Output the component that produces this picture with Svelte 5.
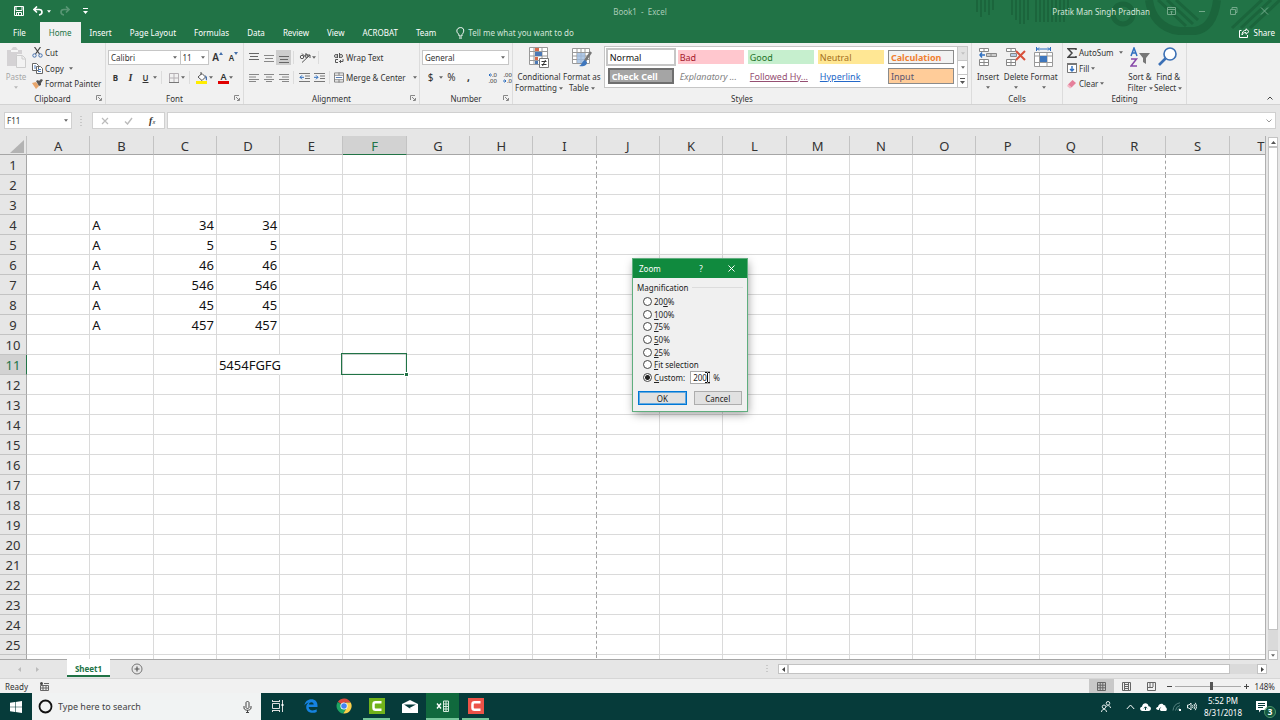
<script>
	const tabs = ['File', 'Home', 'Insert', 'Page Layout', 'Formulas', 'Data', 'Review', 'View', 'ACROBAT', 'Team'];
	const columns = 'ABCDEFGHIJKLMNOPQRST'.split('');
	const rows = Array.from({ length: 25 }, (_, i) => i + 1);
	const cells = {
		B4: 'A', C4: 34, D4: 34,
		B5: 'A', C5: 5, D5: 5,
		B6: 'A', C6: 46, D6: 46,
		B7: 'A', C7: 546, D7: 546,
		B8: 'A', C8: 45, D8: 45,
		B9: 'A', C9: 457, D9: 457,
		D11: '5454FGFG'
	};
	// last column of every printed page
	const breaks = ['I', 'R'];

	const styles = [
		['Normal', 'normal'],
		['Bad', 'bad'],
		['Good', 'good'],
		['Neutral', 'neutral'],
		['Calculation', 'calculation'],
		['Check Cell', 'check'],
		['Explanatory ...', 'explanatory'],
		['Followed Hy...', 'followed'],
		['Hyperlink', 'hyperlink'],
		['Input', 'inputcell']
	];

	// label is split round its access key
	const zooms = [
		['20', '0', '%'],
		['', '1', '00%'],
		['', '7', '5%'],
		['', '5', '0%'],
		['', '2', '5%'],
		['', 'F', 'it selection'],
		['', 'C', 'ustom:']
	];

	let activeTab = 'Home';
	let selected = 'F11';
	let zoomChoice = 6;
	let customZoom = '200';
	let zoomLevel = 56;
	let dialogOpen = true;

	$: selectedCol = selected[0];
	$: selectedRow = Number(selected.slice(1));
</script>

{#snippet caret()}
	<svg class="caret" width="5" height="3" viewBox="0 0 5 3"><path d="M0 0h5L2.500 3z" /></svg>
{/snippet}

{#snippet launcher()}
	<button class="launcher" aria-label="More options">
		<svg width="6" height="6" viewBox="0 0 6 6"><path d="M.5 5V.5H5M2 2l3 3M5.500 3v2.500H3" /></svg>
	</button>
{/snippet}

<div class="window">
	<header>
		<svg class="art" width="320" height="36" viewBox="0 0 320 36" aria-hidden="true">
			<g stroke="#1b653c" fill="none">
				<path stroke-width="2" d="M17 0v12M21 0v17M25 0v12M29 0v15M33 0v10M52 0v15M56 0v20M60 0v24M64 0v24M68 0v20M76 0v22M80 0v22M84 0v22M88 0v22M92 0v22M96 0v22M100 0v22M104 0v22M108 0v15" />
				<circle cx="163" cy="14" r="10" stroke-width="5" />
				<path stroke-width="8" d="M189 0c2 16 12 29 30 31h16c13-2 20-14 22-31" />
				<path stroke-width="3" d="M198 0l28 26M207 0l26 24M216 0l22 20M272 28l30-28M281 28l30-28M290 28l30-28" />
			</g>
		</svg>
		<div class="titlebar">
			<div class="quick">
				<button aria-label="Save">
					<svg width="10" height="10" viewBox="0 0 10 10"><path fill="none" stroke="#fff" d="M.5.5h9v9h-9zM2 1v3.500h6V1M2.500 9V6.500h5V9M4.500 7v2" /></svg>
				</button>
				<button aria-label="Undo">
					<svg width="10" height="10" viewBox="0 0 10 10"><path fill="none" stroke="#fff" stroke-width="1.600" d="M4 .5L1 3.500l3 3M1 3.500h5c4 0 4 5 0 5.500" /></svg>
				</button>
				{@render caret()}
				<button class="faded" aria-label="Redo">
					<svg width="10" height="10" viewBox="0 0 10 10"><path fill="none" stroke="#fff" stroke-width="1.600" d="M6 .5l3 3-3 3M9 3.500H4C0 3.500 0 8.500 4 9" /></svg>
				</button>
				<button aria-label="Customize Quick Access Toolbar">
					<svg width="5" height="6" viewBox="0 0 5 6"><path fill="#fff" d="M0 0h5v1H0zM0 3h5L2.500 6z" /></svg>
				</button>
			</div>
			<span class="doc">Book1&nbsp; -&nbsp; Excel</span>
			<div class="account">
				<span>Pratik Man Singh Pradhan</span>
				<button aria-label="Ribbon Display Options">
					<svg width="9" height="8" viewBox="0 0 9 8"><path d="M.5.5h8v7h-8zM.5 2.500h8M4.500 7V4M3 5.500L4.500 4 6 5.500" /></svg>
				</button>
				<button aria-label="Minimize"><svg width="9" height="8" viewBox="0 0 9 8"><path d="M1 4.500h6" /></svg></button>
				<button aria-label="Restore"><svg width="9" height="8" viewBox="0 0 9 8"><path d="M1.500 2.500h5v5h-5zM3 2V.5h5v5H7" /></svg></button>
				<button aria-label="Close"><svg width="9" height="8" viewBox="0 0 9 8"><path d="M1 .5l7 7M8 .5l-7 7" /></svg></button>
			</div>
		</div>
		<nav>
			{#each tabs as tab}
				<button class="tab" class:active={tab === activeTab} on:click={() => (activeTab = tab)}>{tab}</button>
			{/each}
			<button class="tellme">
				<svg width="9" height="12" viewBox="0 0 9 12"><path fill="none" stroke="#fff" d="M3 9V7.500C-.5 5 .5.7 4.500.6S8.500 5 6 7.500V9zM3 11h3" /></svg>
				Tell me what you want to do
			</button>
			<button class="share">
				<svg width="11" height="10" viewBox="0 0 11 10"><path fill="none" stroke="#fff" d="M2.500 2.500h-2v7h8V7M7 .8l3 2.700-3 2.700V4.500C5 4.500 4 5 3 7c0-3 1.500-4.700 4-4.700z" /></svg>
				Share
			</button>
		</nav>
	</header>

	<section class="ribbon">
		<div class="group clipboard">
			<div class="body">
				<button class="big faded">
					<svg width="20" height="22" viewBox="0 0 20 22"><path fill="#a9a5ab" d="M1 3h4l2-3h3l2 3h4v4h-5v12H1z" /><path fill="#fff" d="M5 3h7v2H5z" /><path fill="#f8f8f8" stroke="#999" d="M10.500 8.500h6l3 3v9h-9zM16 9v3h3" /></svg>
					<span>Paste</span>
					{@render caret()}
				</button>
				<div class="stack">
					<button>
						<svg width="11" height="11" viewBox="0 0 11 11"><path stroke="#444" fill="none" stroke-width="1.200" d="M2.500 0l5 7M8.500 0l-5 7" /><g fill="none" stroke="#4470ad"><circle cx="2.500" cy="8.500" r="1.700" /><circle cx="8.500" cy="8.500" r="1.700" /></g></svg>
						Cut
					</button>
					<button>
						<svg width="11" height="11" viewBox="0 0 11 11"><path fill="#fff" stroke="#666" d="M.5.5h4l2 2v5h-6zM4.500 3.500h4l2 2v5h-6z" /><path stroke="#4f7fbf" d="M2 3h2M2 5h2M6 6.500h3M6 8.500h3" /></svg>
						Copy <i class="gap"></i>{@render caret()}
					</button>
					<button>
						<svg width="11" height="10" viewBox="0 0 11 10"><path fill="#e8a66c" d="M0 4l4-1 3 4-3 3z" /><path fill="#555" d="M4 2l2-1 1 1 2-2 2 1-2 3v2L7 7z" /></svg>
						Format Painter
					</button>
				</div>
			</div>
			<div class="caption">Clipboard {@render launcher()}</div>
		</div>

		<div class="group font">
			<div class="body lines">
				<div class="line">
					<div class="combo family"><input aria-label="Font" value="Calibri" />{@render caret()}</div>
					<div class="combo size"><input aria-label="Font size" value="11" />{@render caret()}</div>
					<button class="ico grow" aria-label="Increase font size">A<svg width="4" height="3" viewBox="0 0 4 3"><path fill="#4470ad" d="M0 3h4L2 0z" /></svg></button>
					<button class="ico grow shrink" aria-label="Decrease font size">A<svg width="4" height="3" viewBox="0 0 4 3"><path fill="#4470ad" d="M0 0h4L2 3z" /></svg></button>
				</div>
				<div class="line">
					<button class="ico"><b>B</b></button>
					<button class="ico"><em>I</em></button>
					<button class="ico"><u>U</u></button>
					{@render caret()}
					<i class="rule"></i>
					<button class="ico" aria-label="Borders">
						<svg width="10" height="10" viewBox="0 0 10 10"><path fill="none" stroke="#b5b0b4" d="M.5.5h9v9h-9zM5 0v10M0 5h10" /><path stroke="#777" d="M0 9.500h10" /></svg>
					</button>
					{@render caret()}
					<i class="rule"></i>
					<button class="ico" aria-label="Fill color">
						<svg width="12" height="12" viewBox="0 0 12 12"><path fill="#ffed00" d="M0 9h11v3H0z" /><path fill="#fff" stroke="#555" d="M2 5l4-3.500L9.500 5 6 8.500zM5 3V0" /><path fill="#4470ad" d="M9 3l2 2v3l-1 .5z" /></svg>
					</button>
					{@render caret()}
					<button class="ico fontcolor" aria-label="Font color">A</button>
					{@render caret()}
				</div>
			</div>
			<div class="caption">Font {@render launcher()}</div>
		</div>

		<div class="group alignment">
			<div class="body lines">
				<div class="line">
					<button class="ico" aria-label="Top align"><svg width="10" height="10" viewBox="0 0 10 10"><path stroke="#666" d="M0 .5h10M1 3.500h8M0 6.500h10" /></svg></button>
					<button class="ico" aria-label="Middle align"><svg width="10" height="10" viewBox="0 0 10 10"><path stroke="#888" d="M0 2.500h10M1 5.500h8M0 8.500h10" /></svg></button>
					<button class="ico on" aria-label="Bottom align"><svg width="10" height="10" viewBox="0 0 10 10"><path stroke="#666" d="M0 3.500h10M1 6.500h8M0 9.500h10" /></svg></button>
					<i class="rule"></i>
					<button class="ico" aria-label="Orientation"><svg width="12" height="11" viewBox="0 0 12 11"><g fill="none" stroke="#555"><circle cx="3" cy="5" r="1.700" /><path d="M3 1.500l3 3M7 1v3.500" /><circle cx="7.500" cy="4" r="1.500" /><path d="M3 10.500L11 3M11 6V3H8" /></g></svg></button>
					{@render caret()}
					<i class="rule"></i>
					<button class="text alone">
						<svg width="10" height="10" viewBox="0 0 10 10"><g fill="none" stroke="#555"><circle cx="2" cy="3" r="1.500" /><path d="M3.500 1v4M5.500 0v5" /><circle cx="7" cy="3" r="1.500" /><path d="M4 6.500H1.500v3H4M9 6v2.500H5.500M7 7L5.500 8.500 7 10" /></g></svg>
						Wrap Text
					</button>
				</div>
				<div class="line">
					<button class="ico" aria-label="Align left"><svg width="10" height="8" viewBox="0 0 10 8"><path stroke="#888" d="M0 .5h10M0 3h7M0 5.500h10M0 7.500h7" /></svg></button>
					<button class="ico" aria-label="Center"><svg width="10" height="8" viewBox="0 0 10 8"><path stroke="#888" d="M0 .5h10M2 3h6M0 5.500h10M2 7.500h6" /></svg></button>
					<button class="ico" aria-label="Align right"><svg width="10" height="8" viewBox="0 0 10 8"><path stroke="#888" d="M0 .5h10M3 3h7M0 5.500h10M3 7.500h7" /></svg></button>
					<i class="rule"></i>
					<button class="ico" aria-label="Decrease indent"><svg width="11" height="9" viewBox="0 0 11 9"><path stroke="#777" d="M0 .5h11M6 3h5M6 5.500h5M0 8.500h11" /><path fill="none" stroke="#2e6fc0" d="M5 4.300H1M3 2.300l-2 2 2 2" /></svg></button>
					<button class="ico" aria-label="Increase indent"><svg width="11" height="9" viewBox="0 0 11 9"><path stroke="#777" d="M0 .5h11M6 3h5M6 5.500h5M0 8.500h11" /><path fill="none" stroke="#2e6fc0" d="M0 4.300h4M2 2.300l2 2-2 2" /></svg></button>
					<i class="rule"></i>
					<button class="text">
						<svg width="10" height="11" viewBox="0 0 11 11"><path fill="#fff" stroke="#777" d="M.5.5h10v10H.5zM.5 3h10M.5 8h10M5.500 0v3M5.500 8v3" /><path stroke="#4470ad" d="M2 5.500h7" /></svg>
						Merge &amp; Center
					</button>
					{@render caret()}
				</div>
			</div>
			<div class="caption">Alignment {@render launcher()}</div>
		</div>

		<div class="group number">
			<div class="body lines">
				<div class="line">
					<div class="combo format"><input aria-label="Number format" value="General" />{@render caret()}</div>
				</div>
				<div class="line">
					<button class="ico sign">$</button>
					{@render caret()}
					<button class="ico sign">%</button>
					<button class="ico sign"><b>,</b></button>
					<i class="rule"></i>
					<button class="ico dec">
						<svg width="4" height="4" viewBox="0 0 4 4"><path stroke="#2e6fc0" fill="none" d="M4 2H1M2.500.5L1 2l1.500 1.500" /></svg>.0<br />.00
					</button>
					<button class="ico dec">
						.00<br /><svg width="4" height="4" viewBox="0 0 4 4"><path stroke="#2e6fc0" fill="none" d="M0 2h3M1.500.5L3 2 1.500 3.500" /></svg>.0
					</button>
				</div>
			</div>
			<div class="caption">Number {@render launcher()}</div>
		</div>

		<div class="group styles">
			<div class="body">
				<button class="big">
					<svg width="20" height="22" viewBox="0 0 20 22"><path fill="#fff" stroke="#999" d="M.5.5h18v17H.5zM0 4.500h18M0 9h18M0 13.500h18M5 0v18M13 0v18" /><path fill="#d9694a" d="M6 1h4v3H6zM6 10h3v3H6z" /><path fill="#4b78b5" d="M6 5h7v4H6zM6 14h3v3H6z" /><path fill="#fff" stroke="#777" d="M10.500 11.500h9v9h-9z" /><path stroke="#333" d="M12.500 14.500h5M12.500 17.500h5M16.500 13l-3 6" /></svg>
					<span>Conditional<br />Formatting {@render caret()}</span>
				</button>
				<button class="big">
					<svg width="20" height="22" viewBox="0 0 20 22"><path fill="#fff" stroke="#999" d="M.5 1.500h17v15H.5zM0 5.500h18M0 9h18M0 12.500h18M5 1v16M9 1v16M13 1v16" /><path fill="#9ebce0" opacity=".8" d="M5 6h8v10H5z" /><path stroke="#777" stroke-width="2.500" d="M19 5l-6 9" /><path fill="#3f77bd" d="M13 13l2 2c0 4-4 5-8 4 3-1 3-5 6-6z" /></svg>
					<span>Format as<br />Table {@render caret()}</span>
				</button>
				<div class="gallery">
					<div class="swatches">
						{#each styles as [name, kind]}
							<button class="swatch {kind}">{name}</button>
						{/each}
					</div>
					<div class="spin">
						<button class="off" aria-label="Row up">{@render caret()}</button>
						<button aria-label="Row down">{@render caret()}</button>
						<button aria-label="More styles"><svg width="5" height="6" viewBox="0 0 5 6"><path fill="#555" d="M0 0h5v1H0zM0 3h5L2.500 6z" /></svg></button>
					</div>
				</div>
			</div>
			<div class="caption">Styles</div>
		</div>

		<div class="group cellsgroup">
			<div class="body">
				<button class="big">
					<svg width="18" height="22" viewBox="0 0 18 22"><path fill="#fff" stroke="#888" d="M.5 1.500h9v3h-9zM5 1v4M.5 12.500h9v6h-9zM5 12v7M0 15.500h10" /><path fill="#ccc" stroke="#888" d="M7.500 6.500h10v3h-10zM12 6v4" /><path stroke="#2e6fc0" stroke-width="1.400" fill="none" d="M6 8H1M3 5.500L1 8l2 2.500" /></svg>
					<span>Insert</span>{@render caret()}
				</button>
				<button class="big">
					<svg width="20" height="22" viewBox="0 0 20 22"><path fill="#fff" stroke="#888" d="M.5 1.500h9v3h-9zM5 1v4M.5 12.500h9v6h-9zM5 12v7M0 15.500h10" /><path fill="#b9cce6" stroke="#888" d="M4.500 6.500h6v3h-6z" /><path stroke="#d8503a" stroke-width="2" d="M10 4l9 9M19 4l-9 9" /></svg>
					<span>Delete</span>{@render caret()}
				</button>
				<button class="big">
					<svg width="20" height="22" viewBox="0 0 20 22"><path stroke="#2e6fc0" fill="none" d="M2.500 0v4M16.500 0v4M3 2h13M5 .5L3.500 2 5 3.500M14 .5L15.500 2 14 3.500" /><path fill="#fff" stroke="#999" d="M.5 5.500h18v14H.5zM0 9h18M0 15.500h18M5.500 5v14M13 5v14" /><path fill="#3f77bd" d="M6 9h7v6H6z" /></svg>
					<span>Format</span>{@render caret()}
				</button>
			</div>
			<div class="caption">Cells</div>
		</div>

		<div class="group editing">
			<div class="body">
				<div class="stack">
					<button>
						<svg width="10" height="10" viewBox="0 0 10 10"><path fill="none" stroke="#444" stroke-width="1.500" d="M9 2V.8H1L5 5 1 9.200h8V8" /></svg>
						AutoSum <i class="gap"></i>{@render caret()}
					</button>
					<button>
						<svg width="10" height="10" viewBox="0 0 10 10"><path fill="#fff" stroke="#777" d="M.5.5h9v9h-9z" /><path fill="#777" d="M0 0h10v2H0z" /><path fill="none" stroke="#2e6fc0" stroke-width="1.400" d="M5 3v5M3 6l2 2 2-2" /></svg>
						Fill {@render caret()}
					</button>
					<button>
						<svg width="10" height="10" viewBox="0 0 10 10"><path fill="#e5809b" d="M5.500 1L9 4 4.500 8.500 1 5.500z" /><path fill="#f3b5c4" d="M1 5.500l3.500 3L3 9.500 0 7z" /></svg>
						Clear {@render caret()}
					</button>
				</div>
				<button class="big">
					<svg width="20" height="22" viewBox="0 0 20 22"><path fill="none" stroke="#2e6fc0" stroke-width="1.500" d="M1 9l3-8 3 8M2 6h4" /><path fill="none" stroke="#8648a8" stroke-width="1.500" d="M1 12h5.500L1 19h6" /><path fill="#777" d="M9 6h11l-4 5v6l-3-2v-4z" /></svg>
					<span>Sort &amp;<br />Filter {@render caret()}</span>
				</button>
				<button class="big">
					<svg width="20" height="22" viewBox="0 0 20 22"><circle cx="12" cy="7" r="6" fill="#fff" stroke="#3b70b5" stroke-width="1.600" /><path stroke="#3b70b5" stroke-width="2.600" d="M7.500 11.500L1 18" /></svg>
					<span>Find &amp;<br />Select {@render caret()}</span>
				</button>
			</div>
			<div class="caption">Editing</div>
		</div>
		<button class="collapse" aria-label="Collapse the ribbon"><svg width="6" height="4" viewBox="0 0 6 4"><path fill="none" stroke="#444" d="M.5 3.500L3 1l2.500 2.500" /></svg></button>
	</section>

	<section class="formula">
		<div class="combo namebox"><input aria-label="Name box" bind:value={selected} />{@render caret()}</div>
		<svg class="grip" width="2" height="10" viewBox="0 0 2 10"><path stroke="#aaa" stroke-dasharray="1 2" d="M1 0v10" /></svg>
		<div class="fx">
			<button aria-label="Cancel entry"><svg width="8" height="8" viewBox="0 0 8 8"><path stroke="#bbb" stroke-width="1.200" d="M1 1l6 6M7 1L1 7" /></svg></button>
			<button aria-label="Enter"><svg width="9" height="8" viewBox="0 0 9 8"><path fill="none" stroke="#bbb" stroke-width="1.400" d="M1 4.500L3.500 7 8 1" /></svg></button>
			<button class="fn"><em>f</em><small>x</small></button>
		</div>
		<div class="combo entry"><input aria-label="Formula bar" /><svg width="6" height="4" viewBox="0 0 6 4"><path fill="none" stroke="#999" d="M.5.5L3 3 5.500.5" /></svg></div>
	</section>

	<main>
		<div class="grid">
			<table>
				<thead>
					<tr>
						<th class="corner"><svg width="14" height="13" viewBox="0 0 14 13"><path fill="#b3b3b3" d="M14 0v13H0z" /></svg></th>
						{#each columns as col}
							<th class:current={col === selectedCol}>{col}</th>
						{/each}
					</tr>
				</thead>
				<tbody>
					{#each rows as row}
						<tr>
							<th class:current={row === selectedRow}>{row}</th>
							{#each columns as col}
								{@const value = cells[col + row]}
								<td
									class:num={typeof value === 'number'}
									class:spill={value?.length > 7}
									class:break={breaks.includes(col)}
									class:selected={selected === col + row}
									on:click={() => (selected = col + row)}>{value ?? ''}</td
								>
							{/each}
						</tr>
					{/each}
					<tr>
						<th></th>
						{#each columns as col}
							<td class:break={breaks.includes(col)}></td>
						{/each}
					</tr>
				</tbody>
			</table>
		</div>
		<div class="vscroll">
			<button aria-label="Scroll up"><svg width="5" height="3" viewBox="0 0 5 3"><path fill="#555" d="M0 3h5L2.500 0z" /></svg></button>
			<div class="thumb"></div>
			<div class="track"></div>
			<button aria-label="Scroll down">{@render caret()}</button>
		</div>
	</main>

	<section class="sheets">
		<button class="step" aria-label="Previous sheet"><svg width="4" height="5" viewBox="0 0 4 5"><path fill="#bbb" d="M3 0v5L0 2.500z" /></svg></button>
		<button class="step" aria-label="Next sheet"><svg width="4" height="5" viewBox="0 0 4 5"><path fill="#bbb" d="M0 0v5l3-2.500z" /></svg></button>
		<button class="sheet">Sheet1</button>
		<button class="add" aria-label="New sheet"><svg width="12" height="12" viewBox="0 0 12 12"><circle cx="6" cy="6" r="5" fill="none" stroke="#777" /><path stroke="#555" stroke-width="1.200" d="M6 3.500v5M3.500 6h5" /></svg></button>
		<svg class="grip" width="2" height="8" viewBox="0 0 2 8"><path stroke="#aaa" stroke-dasharray="1 2" d="M1 0v8" /></svg>
		<div class="hscroll">
			<button aria-label="Scroll left"><svg width="3" height="5" viewBox="0 0 3 5"><path fill="#444" d="M3 0v5L0 2.500z" /></svg></button>
			<div class="thumb"></div>
			<div class="track"></div>
			<button aria-label="Scroll right"><svg width="3" height="5" viewBox="0 0 3 5"><path fill="#444" d="M0 0v5l3-2.500z" /></svg></button>
		</div>
	</section>

	<section class="status">
		<span>Ready</span>
		<svg class="macro" width="9" height="9" viewBox="0 0 9 9"><path fill="none" stroke="#666" d="M.5 3.500h8v5h-8zM3 4v5M6 4v5M1 6h7" /><circle cx="1.500" cy="1.500" r="1.500" fill="#444" /><path stroke="#666" d="M4 1.500h5" /></svg>
		<div class="views">
			<button class="on" aria-label="Normal view"><svg width="9" height="9" viewBox="0 0 9 9"><path fill="none" stroke="#666" d="M.5.5h8v8h-8zM3.200 0v9M5.800 0v9M0 3.200h9M0 5.800h9" /></svg></button>
			<button aria-label="Page layout view"><svg width="9" height="9" viewBox="0 0 9 9"><path fill="none" stroke="#666" d="M.5.5h8v8h-8zM2.500 1v7M6.500 1v7M3 2.500h3M3 4.500h3M3 6.500h3" /></svg></button>
			<button aria-label="Page break preview"><svg width="9" height="9" viewBox="0 0 9 9"><path fill="none" stroke="#666" d="M.5.5h8v8h-8zM3 0v5M6 0v5M0 5.500h6" /></svg></button>
		</div>
		<button class="step-zoom" aria-label="Zoom out"><svg width="5" height="5" viewBox="0 0 5 5"><path stroke="#444" d="M0 2.500h5" /></svg></button>
		<input class="zoom" type="range" min="0" max="100" aria-label="Zoom" bind:value={zoomLevel} />
		<button class="step-zoom" aria-label="Zoom in"><svg width="5" height="5" viewBox="0 0 5 5"><path stroke="#444" d="M0 2.500h5M2.500 0v5" /></svg></button>
		<button class="percent" on:click={() => (dialogOpen = true)}>148%</button>
	</section>

	<footer>
		<button class="start" aria-label="Start"><svg width="12" height="12" viewBox="0 0 12 12"><path fill="#fff" d="M0 1.700L5 1v4.700H0zM5.600.9L12 0v5.700H5.600zM0 6.300h5V11l-5-.7zM5.600 6.300H12V12l-6.400-.9z" /></svg></button>
		<label class="search">
			<svg width="15" height="15" viewBox="0 0 15 15"><circle cx="7.500" cy="7.500" r="6" fill="none" stroke="#111" stroke-width="1.800" /></svg>
			<input placeholder="Type here to search" />
			<svg width="9" height="12" viewBox="0 0 9 12"><path fill="none" stroke="#444" d="M3 1.500c0-1.300 3-1.300 3 0v5c0 1.300-3 1.300-3 0zM1 5v2c0 3 7 3 7 0V5M4.500 9v2.500M3 11.500h3" /></svg>
		</label>
		<div class="apps">
			<button aria-label="Task view"><svg width="12" height="12" viewBox="0 0 12 12"><path fill="none" stroke="#ddd" d="M.5 3.500h7v5h-7zM.5 0v2M7.500 0v2M0 1.500h8M.5 12v-2M7.500 12v-2M0 10.500h8M10.500 0v12" /><path fill="#fff" d="M9.500 4h2v2h-2z" /></svg></button>
			<button aria-label="Edge"><svg width="14" height="14" viewBox="0 0 14 14"><path fill="#1683e0" d="M.5 6.500C1 2.500 4 .3 7.300.3c4 0 6.200 2.700 6.200 6.200v1.600H4.700c0 4 5 4 8 2.200v2.600c-4.500 2-10.500.8-10.500-4.900C2.200 5.500 4 4 5 3.500 3.200 3.700 1.600 4.700.5 6.500zM4.900 5.600h4.800C9.500 2.400 5.300 2.500 4.900 5.600z" /></svg></button>
			<button aria-label="Chrome"><svg width="16" height="16" viewBox="0 0 16 16"><path fill="#dd4b3e" d="M8 8L1.900 3.700A7.500 7.500 0 0114.700 4.500H8z" /><path fill="#1fa463" d="M1.700 4a7.500 7.500 0 005.600 11.500L11 9.500 8 8z" /><path fill="#fcd04b" d="M14.700 4.500A7.500 7.500 0 017.300 15.500L11 9.500 10 4.500z" /><circle cx="8" cy="8" r="3.600" fill="#fff" /><circle cx="8" cy="8" r="2.800" fill="#4384f2" /></svg></button>
			<button class="open" aria-label="Camtasia"><svg width="16" height="16" viewBox="0 0 16 16"><path fill="#71b21a" d="M0 0h16v16H0z" /><path fill="none" stroke="#fff" stroke-width="2.500" d="M12.500 4.300H6.500q-2 0-2 2v3.400q0 2 2 2h6" /></svg></button>
			<button aria-label="Mail"><svg width="16" height="13" viewBox="0 0 16 13"><path fill="#fff" d="M0 4l8-4 8 4v9H0z" /><path fill="#063b3a" d="M2 4.500h12L7.500 8l2.500 2z" /></svg></button>
			<button class="open front" aria-label="Excel"><svg width="13" height="12" viewBox="0 0 13 12"><path stroke="#fff" stroke-width="1.400" fill="none" d="M1 3.500l4 5M5 3.500l-4 5" /><path fill="none" stroke="#d6eadd" d="M7.500 1v10.500h5V1zM10 1v10M7 4h5M7 6.500h5M7 9h5" /></svg></button>
			<button class="open" aria-label="Recorder"><svg width="16" height="16" viewBox="0 0 16 16"><path fill="#ec5348" d="M0 0h16v16H0z" /><path fill="none" stroke="#fff" stroke-width="2.500" d="M12.500 4.300H6.500q-2 0-2 2v3.400q0 2 2 2h6" /></svg></button>
		</div>
		<div class="tray">
			<svg class="people" width="10" height="11" viewBox="0 0 10 11"><g fill="none" stroke="#dfe9e8"><circle cx="7" cy="2.300" r="1.800" /><path d="M5 6c.5-2 4.500-2 4.500 1" /><circle cx="3" cy="5.800" r="1.800" /><path d="M.5 11c0-3.500 5-3.500 5 0" /></g></svg>
			<svg width="9" height="6" viewBox="0 0 9 6"><path fill="none" stroke="#fff" d="M.8 5l3.700-4 3.700 4" /></svg>
			<svg width="11" height="8" viewBox="0 0 11 8"><path fill="#fff" d="M2.500 8C-.5 8-.7 4 2 3.700 2.500-.5 8-1 8.500 3.200 12 3.500 11.500 8 8.500 8z" /><path fill="none" stroke="#063b3a" d="M5.500 7V4M4 5.300l1.500-1.500L7 5.300" /></svg>
			<svg width="11" height="8" viewBox="0 0 11 8"><path fill="#fff" d="M0 5.500C.5 4 1.500 4 2 4 2.500 0 7 0 7.500 2 10 2 9.500 4 9.500 4 11.500 5 11 8 9.500 8H5C3 7 4 5 5.500 4.500 3 4 3 7 3 7-.2 7 0 5.500 0 5.500z" /></svg>
			<svg width="10" height="9" viewBox="0 0 10 9"><g fill="none" stroke="#55817f"><path d="M1 8.500Q1.500 2 8 .8M3.500 8.500Q4 4.500 8 3.500M5.800 8.500Q6 6.500 8 6" /></g><path fill="#fff" d="M7 7h2v2H7z" /></svg>
			<svg width="10" height="9" viewBox="0 0 10 9"><path fill="none" stroke="#dfe9e8" d="M.5 3h1.500L4 1v7L2 6H.5zM5.500 3q1 1.500 0 3M7 2q2 2.500 0 5M8.300.8q3 3.700 0 7.400" /></svg>
		</div>
		<div class="clock"><span>5:52 PM</span><span>8/31/2018</span></div>
		<button class="notes" aria-label="Notifications">
			<svg width="12" height="12" viewBox="0 0 12 12"><path fill="#fff" d="M0 0h11v9H5l-2 2.500V9H0z" /><path stroke="#063b3a" d="M2 2.500h7M2 4.500h7M2 6.500h5" /></svg>
			<span>3</span>
		</button>
	</footer>

	{#if dialogOpen}
		<form class="dialog" on:submit|preventDefault={() => (dialogOpen = false)}>
			<div class="bar">
				<h2>Zoom</h2>
				<button type="button">?</button>
				<button type="button" aria-label="Close" on:click={() => (dialogOpen = false)}>
					<svg width="7" height="7" viewBox="0 0 7 7"><path stroke="#fff" d="M.5.5l6 6M6.500.5l-6 6" /></svg>
				</button>
			</div>
			<div class="heading">Magnification</div>
			<div class="options">
				{#each zooms as [before, key, after], i}
					<div class="option">
						<label><input type="radio" name="zoom" value={i} bind:group={zoomChoice} /><span>{before}<u>{key}</u>{after}</span></label>
						{#if i === 6}
							<span class="custom">
								<input aria-label="Custom zoom" bind:value={customZoom} /> %
								<svg class="beam" width="5" height="11" viewBox="0 0 5 11"><path fill="none" stroke="#111" d="M0 .5h2l.5.5.5-.5h2M2.500 1v9M0 10.500h2l.5-.5.5.5h2" /></svg>
							</span>
						{/if}
					</div>
				{/each}
			</div>
			<div class="actions">
				<button class="ok">OK</button>
				<button type="button" on:click={() => (dialogOpen = false)}>Cancel</button>
			</div>
		</form>
	{/if}
</div>

<style>
	:global(body) {
		background: #e6e6e6;
	}
	.window {
		position: relative;
		display: flex;
		flex-direction: column;
		height: 100vh;
		overflow: hidden;
		font: 8px/11px 'Noto Sans', 'Open Sans', sans-serif;
		color: #333;
	}
	button,
	input {
		font: inherit;
		color: inherit;
		border: 0;
		padding: 0;
		margin: 0;
		background: none;
		box-sizing: border-box;
	}
	button {
		display: flex;
		align-items: center;
		justify-content: center;
	}
	input {
		min-width: 0;
		outline: none;
	}
	svg {
		flex: none;
		display: block;
	}
	.caret {
		fill: #666;
		display: inline-block;
		vertical-align: middle;
		width: 4px;
	}
	.faded {
		opacity: 0.4;
	}

	/* title bar and tabs */
	header {
		position: relative;
		background: #217346;
		color: #fff;
	}
	.art {
		position: absolute;
		right: 0;
		top: 0;
	}
	.titlebar {
		position: relative;
		display: grid;
		grid-template-columns: 1fr auto 1fr;
		align-items: center;
		height: 22px;
	}
	.quick {
		display: flex;
		align-items: center;
		gap: 9px;
		padding-left: 14px;
	}
	.quick .caret {
		fill: #fff;
		margin-left: -5px;
	}
	.quick .faded {
		opacity: 0.25;
		margin-right: 4px;
	}
	.doc {
		color: #a9cbb8;
	}
	.account {
		display: flex;
		justify-content: flex-end;
		align-items: center;
		gap: 22px;
		padding-right: 11px;
		color: #d3e5da;
		white-space: nowrap;
	}
	.account span {
		margin-right: -5px;
	}
	.account path {
		fill: none;
		stroke: #73a98a;
	}
	nav {
		position: relative;
		display: flex;
		height: 21px;
		padding-left: 2px;
	}
	.tab {
		padding: 0 9px;
		height: 21px;
		white-space: nowrap;
	}
	.tab:first-child {
		padding: 0 14px 0 11px;
	}
	.tab.active {
		background: #f1f1f1;
		color: #217346;
	}
	.tellme {
		gap: 3px;
		margin-left: 11px;
		color: #d3e5da;
	}
	.share {
		gap: 4px;
		margin-left: auto;
		padding-right: 5px;
	}

	/* ribbon */
	.ribbon {
		display: flex;
		background: #f1f1f1;
		border-bottom: 1px solid #d2d2d2;
	}
	.group {
		display: flex;
		flex-direction: column;
		flex: none;
		box-sizing: border-box;
		padding: 2px 2px 0;
		border-right: 1px solid #dcdcdc;
	}
	.body {
		display: flex;
		height: 46px;
	}
	.caption {
		position: relative;
		height: 11px;
		padding-top: 2px;
		text-align: center;
	}
	.launcher {
		position: absolute;
		right: 1px;
		top: 4px;
	}
	.launcher path {
		fill: none;
		stroke: #888;
	}
	.clipboard {
		width: 106px;
	}
	.font {
		width: 138px;
	}
	.alignment {
		width: 176px;
	}
	.number {
		width: 93px;
	}
	.styles {
		width: 459px;
	}
	.cellsgroup {
		width: 91px;
	}
	.editing {
		width: 124px;
	}
	.stack {
		display: flex;
		flex-direction: column;
		justify-content: space-between;
		align-items: flex-start;
	}
	.stack button {
		height: 15px;
		gap: 2px;
		white-space: nowrap;
	}
	.gap {
		width: 1px;
	}
	.big {
		flex-direction: column;
		justify-content: flex-start;
		padding-top: 2px;
		min-width: 28px;
	}
	.big > span {
		line-height: 11px;
		margin-top: 2px;
		white-space: nowrap;
	}
	.big > .caret {
		margin-top: 4px;
	}
	.clipboard .big {
		margin-right: 2px;
	}
	.editing .stack {
		width: 59px;
		padding-left: 2px;
	}
	.lines {
		flex-direction: column;
		gap: 5px;
		padding-top: 5px;
		height: 41px;
	}
	.line {
		display: flex;
		align-items: center;
		height: 15px;
	}
	.combo {
		display: flex;
		align-items: center;
		box-sizing: border-box;
		height: 15px;
		padding: 0 3px 0 2px;
		background: #fff;
		border: 1px solid #c6c6c6;
	}
	.combo input {
		flex: 1;
		width: 0;
	}
	.family {
		width: 74px;
	}
	.size {
		width: 29px;
		border-left: 0;
	}
	.format {
		width: 87px;
	}
	.ico {
		flex: none;
		width: 15px;
		height: 15px;
	}
	.ico.on {
		background: #cdcdcd;
	}
	.grow {
		align-items: flex-start;
		padding-top: 2px;
		margin-left: 1px;
		font-size: 10px;
		font-weight: 600;
	}
	.shrink {
		font-size: 8px;
	}
	.rule {
		width: 1px;
		height: 13px;
		margin: 0 3px 0 2px;
		background: #dcdcdc;
	}
	.font .rule {
		margin: 0 4px;
	}
	em {
		font-family: 'Liberation Serif', serif;
		font-size: 10px;
		font-weight: 700;
	}
	.ico u {
		font-weight: 600;
	}
	.fontcolor {
		width: 11px;
		height: 12px;
		margin-left: 5px;
		font-size: 9px;
		font-weight: 600;
		border-bottom: 3px solid #e00000;
	}
	.text {
		justify-content: flex-start;
		gap: 2px;
		width: 76px;
		margin: 0 3px 0 auto;
		white-space: nowrap;
	}
	.alone {
		margin-right: 7px;
	}
	.sign {
		width: 17px;
		font-size: 10px;
	}
	.dec {
		display: block;
		font-size: 6px;
		line-height: 6px;
		text-align: right;
	}
	.dec svg {
		display: inline-block;
	}

	.gallery {
		display: flex;
		flex: 1;
		height: 42px;
		box-sizing: border-box;
		margin: 1px 1px 0 3px;
		border: 1px solid #c6c6c6;
		background: #fff;
	}
	.swatches {
		flex: 1;
		display: grid;
		grid-template-columns: repeat(5, minmax(0, 1fr));
		gap: 4px;
		padding: 3px;
	}
	.swatch {
		justify-content: flex-start;
		padding: 0 2px;
		font-size: 9px;
		white-space: nowrap;
	}
	.normal {
		outline: 2px solid #c6c6c6;
		color: #111;
	}
	.bad {
		background: #ffc7ce;
		color: #a5172b;
	}
	.good {
		background: #c6efce;
		color: #1c7226;
	}
	.neutral {
		background: #ffe794;
		color: #a5711c;
	}
	.calculation {
		background: #f2f2f2;
		border: 1px solid #8b8b8b;
		color: #f08030;
		font-weight: 700;
	}
	.check {
		background: #a5a5a5;
		border: 2px solid #6f6f6f;
		color: #fff;
		font-weight: 700;
	}
	.explanatory {
		color: #7f7f7f;
		font-style: italic;
	}
	.followed {
		color: #954f72;
		text-decoration: underline;
	}
	.hyperlink {
		color: #2468c8;
		text-decoration: underline;
	}
	.inputcell {
		background: #ffcc99;
		border: 1px solid #8b8b8b;
		color: #5b5470;
	}
	.spin {
		display: grid;
		grid-template-rows: repeat(3, 1fr);
		width: 9px;
		border-left: 1px solid #c6c6c6;
	}
	.spin button + button {
		border-top: 1px solid #c6c6c6;
	}
	.spin .off {
		background: #e1e1e1;
	}
	.off .caret {
		fill: #c0c0c0;
	}
	.collapse {
		align-self: flex-end;
		margin-left: auto;
		padding: 0 7px 4px 0;
	}

	/* formula bar */
	.formula {
		display: flex;
		align-items: center;
		padding: 7px 4px;
		background: #e6e6e6;
	}
	.formula .combo,
	.fx {
		height: 17px;
		background: #fff;
		border: 1px solid #d0d0d0;
		box-sizing: border-box;
	}
	.namebox {
		width: 68px;
	}
	.grip {
		margin: 0 10px 0 8px;
	}
	.fx {
		display: flex;
		width: 73px;
		margin-right: 2px;
	}
	.fx button {
		flex: 1;
	}
	.fn small {
		font-size: 6px;
		font-style: italic;
		align-self: flex-end;
	}
	.entry {
		flex: 1;
	}

	/* sheet */
	main {
		display: flex;
		flex: 1;
		min-height: 0;
		background: #e6e6e6;
	}
	.grid {
		flex: 1;
		overflow: hidden;
		background: #fff;
		border-right: 1px solid #b0b0b0;
		border-bottom: 1px solid #a6a6a6;
	}
	table {
		width: calc(100% + 28px);
		table-layout: fixed;
		border-spacing: 0;
		font-size: 13px;
		line-height: 17px;
		color: #111;
	}
	th,
	td {
		position: relative;
		box-sizing: border-box;
		height: 20px;
		padding: 2px 2px 0;
		white-space: nowrap;
		border-right: 1px solid #dadada;
		border-bottom: 1px solid #dadada;
	}
	th {
		padding: 2px 0 0;
		font-weight: 400;
		color: #333;
		background: #e6e6e6;
		border-color: #c3c3c3;
	}
	thead th {
		height: 19px;
		line-height: 16px;
		border-bottom-color: #a6a6a6;
	}
	tbody th {
		border-right-color: #a6a6a6;
	}
	th.current {
		background: #d2d2d2;
		color: #217346;
	}
	thead th.current {
		border-bottom-color: #217346;
	}
	tbody th.current {
		border-right-color: #217346;
	}
	.corner {
		width: 27px;
	}
	.corner svg {
		margin-left: 10px;
	}
	.num {
		text-align: right;
	}
	.break {
		border-right: 1px dashed #a0a0a0;
	}
	.spill {
		border-right-color: #fff;
	}
	.selected::after {
		content: '';
		position: absolute;
		inset: -2px -1px -1px -2px;
		border: 1px solid #217346;
		box-shadow: inset 0 0 1px #217346;
	}
	.selected::before {
		content: '';
		position: absolute;
		z-index: 1;
		right: -2px;
		bottom: -2px;
		width: 3px;
		height: 3px;
		background: #217346;
		outline: 1px solid #fff;
	}
	.vscroll {
		display: flex;
		flex-direction: column;
		width: 10px;
		margin: 1px 2px 0;
	}
	.vscroll button,
	.hscroll button,
	.thumb {
		background: #fff;
		border: 1px solid #c3c3c3;
		box-sizing: border-box;
	}
	.vscroll button {
		height: 10px;
	}
	.vscroll .thumb {
		flex: 24;
	}
	.track {
		flex: 1;
		background: #dadada;
	}

	.sheets {
		display: flex;
		align-items: center;
		height: 19px;
		padding-left: 11px;
		background: #e6e6e6;
		border-bottom: 1px solid #d6d6d6;
		box-sizing: border-box;
	}
	.step {
		width: 18px;
	}
	.sheet {
		align-self: flex-start;
		width: 43px;
		height: 18px;
		margin: -1px 0 0 20px;
		padding-top: 2px;
		background: #fff;
		border-bottom: 2px solid #217346;
		color: #217346;
		font-weight: 700;
	}
	.add {
		margin-left: 21px;
	}
	.sheets .grip {
		margin-left: auto;
	}
	.hscroll {
		display: flex;
		width: 38.5%;
		height: 10px;
		margin-right: 13px;
	}
	.hscroll button {
		width: 10px;
	}
	.hscroll .thumb {
		flex: 16;
	}

	.status {
		display: flex;
		align-items: center;
		height: 14px;
		padding: 0 5px;
		background: #f1f1f1;
	}
	.macro {
		margin-left: 12px;
	}
	.views {
		display: flex;
		margin: 0 3px 0 auto;
	}
	.views button {
		width: 25px;
		height: 14px;
	}
	.views .on {
		background: #c9c9c9;
	}
	.zoom {
		appearance: none;
		width: 66px;
		height: 10px;
		margin: 0 3px;
		background: linear-gradient(#aaa, #aaa) center / 100% 1px no-repeat;
	}
	.zoom::-webkit-slider-thumb {
		appearance: none;
		width: 3px;
		height: 8px;
		background: #555;
	}
	.percent {
		margin-left: 6px;
	}

	/* taskbar */
	footer {
		display: flex;
		align-items: stretch;
		height: 27px;
		background: #063b3a;
		color: #fff;
	}
	.start {
		width: 32px;
	}
	.search {
		display: flex;
		align-items: center;
		gap: 5px;
		width: 229px;
		padding: 0 9px 0 6px;
		box-sizing: border-box;
		background: #f1f3f3;
		color: #333;
		font-size: 9px;
	}
	.search input {
		flex: 1;
	}
	.search input::placeholder {
		color: #444;
		opacity: 1;
	}
	.apps {
		display: flex;
	}
	.apps button {
		width: 33px;
		border-bottom: 2px solid transparent;
		border-top: 1px solid transparent;
	}
	.apps .open {
		border-image: linear-gradient(90deg, transparent 3px, #76c69a 3px, #76c69a 30px, transparent 30px) 0 0 2 0;
	}
	.apps .front {
		background: #10693d;
		border-image: none;
		border-bottom-color: #76c69a;
	}
	.tray {
		display: flex;
		align-items: center;
		gap: 5px;
		margin-left: auto;
	}
	.people {
		margin-right: 10px;
	}
	.clock {
		display: flex;
		flex-direction: column;
		justify-content: center;
		align-items: center;
		width: 52px;
		line-height: 12px;
	}
	.notes {
		position: relative;
		width: 26px;
		margin-right: 5px;
	}
	.notes span {
		position: absolute;
		right: 0;
		bottom: 3px;
		width: 10px;
		height: 10px;
		line-height: 10px;
		border-radius: 50%;
		background: #14583f;
		outline: 1px solid #4f9a6c;
		font-weight: 700;
	}

	/* zoom dialog */
	.dialog {
		position: absolute;
		left: 633px;
		top: 259px;
		width: 114px;
		background: #f0f0f0;
		outline: 1px solid #5fae7e;
		box-shadow: 1px 3px 9px rgba(0, 0, 0, 0.4);
		color: #222;
	}
	.bar {
		display: flex;
		align-items: center;
		height: 19px;
		padding: 0 1px 0 6px;
		background: #108a3e;
		color: #fff;
	}
	.bar h2 {
		flex: 1;
		margin: 0;
		font-size: 8px;
		font-weight: 400;
	}
	.bar button {
		width: 30px;
		height: 19px;
	}
	.heading {
		display: flex;
		align-items: center;
		gap: 3px;
		padding: 4px 4px 2px;
	}
	.heading::after {
		content: '';
		flex: 1;
		border-top: 1px solid #dcdcdc;
	}
	.options {
		display: grid;
		grid-auto-rows: minmax(0, 1fr);
		height: 89px;
		padding-left: 10px;
	}
	.option,
	.option label {
		display: flex;
		align-items: center;
	}
	.option label {
		gap: 2px;
	}
	.option input[type='radio'] {
		appearance: none;
		width: 9px;
		height: 9px;
		border: 1px solid #444;
		border-radius: 50%;
		background: #fff;
	}
	.option input[type='radio']:checked {
		background: radial-gradient(circle, #222 2px, #fff 3px);
	}
	.custom {
		position: relative;
		display: flex;
		align-items: center;
		gap: 3px;
		margin-left: 5px;
	}
	.custom input {
		width: 20px;
		height: 13px;
		padding-left: 2px;
		background: #fff;
		border: 1px solid #aaa;
	}
	.beam {
		position: absolute;
		left: 15px;
		top: 1px;
	}
	.actions {
		display: grid;
		grid-template-columns: 1fr 1fr;
		gap: 7px;
		padding: 7px 5px 6px;
	}
	.actions button {
		height: 14px;
		background: #e1e1e1;
		border: 1px solid #adadad;
	}
	.actions .ok {
		border-color: #0078d7;
		outline: 1px solid #65a9de;
		outline-offset: -2px;
	}
</style>
